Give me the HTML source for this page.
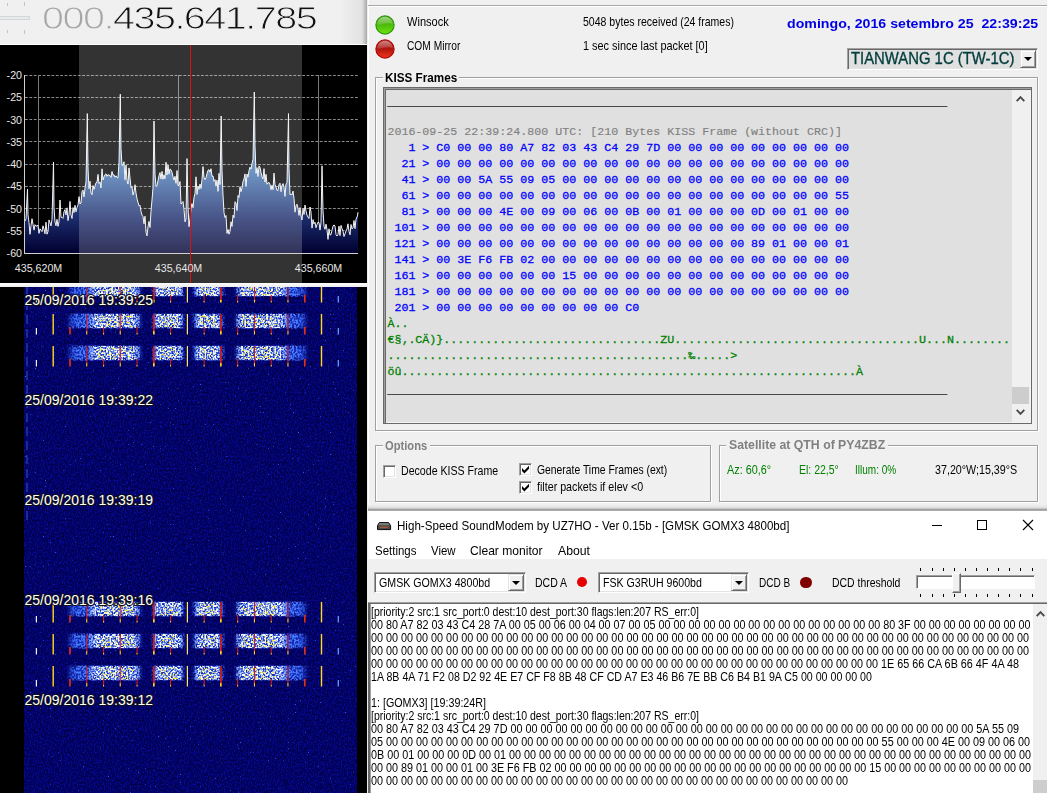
<!DOCTYPE html>
<html lang="pt"><head><meta charset="utf-8"><title>SDR + KISS + SoundModem</title>
<style>html,body{margin:0;padding:0}body{width:1047px;height:793px;overflow:hidden;position:relative;background:#f0f0f0;-webkit-font-smoothing:antialiased}
#left{position:absolute;left:0;top:0;width:367px;height:793px;background:#000;overflow:hidden}
#ltop{position:absolute;left:0;top:0;width:367px;height:44px;background:linear-gradient(90deg,#f0f0f0 0,#f0f0f0 340px,#e2e2e2 362px,#a8a8a8 367px);border-bottom:1px solid #fff}
#ltop .trk{position:absolute;left:0;top:16px;width:29px;height:2px;background:#e6eaea;border:1px solid #d4d8d8;border-left:0}
#ltop .tk{position:absolute;width:1px;height:3px;background:#c4c4c4}
#freq{position:absolute;left:42.2px;top:1px;font:30.5px/34px "Liberation Sans",sans-serif;color:#111;letter-spacing:-1.2px;-webkit-text-stroke:0.9px #f0f0f0;transform:scaleX(1.3);transform-origin:0 0;white-space:nowrap;font-weight:400}
#freq .g{color:#a6a6a6}
.spec{position:absolute;left:0;top:45px}
.spec .ax{font:10.67px "Liberation Sans",sans-serif;fill:#e8e8e8}
#split{position:absolute;left:0;top:283px;width:367px;height:4px;background:linear-gradient(#fff,#ececec)}
.wf{position:absolute;left:24px;top:287px}
.wf .ts{font:14px "Liberation Sans",sans-serif;fill:#fff;stroke:#101018;stroke-width:2.2px;paint-order:stroke;stroke-linejoin:round}

#rt{position:absolute;left:368px;top:0;width:679px;height:511px;background:#f0f0f0;overflow:hidden;box-shadow:inset 1px 0 0 #fff}
#rt .topline{position:absolute;left:0;top:5px;width:679px;height:1px;background:#a8a8a8;border-bottom:1px solid #fff}
.a{position:absolute;white-space:nowrap;display:block;transform-origin:0 50%}
.ms{font:12.4px "Liberation Sans",sans-serif;color:#000}
.grn{color:#008000}
.date{font:bold 13.3px "Liberation Sans",sans-serif;color:#0000e6}
.tw{font:16px "Liberation Sans",sans-serif;color:#003c3c;-webkit-text-stroke:0.35px #003c3c}
.gbl{font:bold 12px "Liberation Sans",sans-serif;color:#000}
.gbl.gr{color:#808080}
.sat{font:bold 12px "Liberation Sans",sans-serif;color:#808080}
.led{position:absolute;width:19px;height:19px;border-radius:50%;box-sizing:border-box}
.lg{background:radial-gradient(ellipse 70% 45% at 50% 22%,#a8e878 0,#6cc82c 55%,rgba(80,180,20,0) 100%),linear-gradient(#5abf1c,#52c00c 60%,#66dc10);border:1px solid #3f9c0c}
.lr{background:radial-gradient(ellipse 70% 45% at 50% 22%,#d87868 0,#b83020 55%,rgba(170,30,20,0) 100%),linear-gradient(#a81c14,#b41810 60%,#e02818);border:1px solid #98100c}
.combo{position:absolute;box-sizing:border-box;background:#f0f0f0;border:1px solid;border-color:#a0a0a0 #fff #fff #a0a0a0;box-shadow:inset 1px 1px 0 #696969,inset -1px -1px 0 #e3e3e3}
.cbtn{position:absolute;right:1px;top:1px;bottom:1px;width:16px;box-sizing:border-box;background:#f0f0f0;border:1px solid;border-color:#e3e3e3 #696969 #696969 #e3e3e3;box-shadow:inset 1px 1px 0 #fff,inset -1px -1px 0 #a0a0a0}
.cbtn i{position:absolute;left:3px;top:6px;border:4px solid transparent;border-top:4px solid #000;border-bottom:0;width:0;height:0}
.gb{position:absolute;box-sizing:border-box;border:1px solid #a0a0a0;box-shadow:inset 1px 1px 0 #fff,1px 1px 0 #fff}
.gl{position:absolute;background:#f0f0f0}
#kbox{position:absolute;left:15px;top:87px;width:649px;height:337px;box-sizing:border-box;border:1px solid #696969;box-shadow:inset 1px 1px 0 #a0a0a0,inset 2px 2px 0 #696969,inset -1px -1px 0 #f4f4f4;background:#e0e0e0;overflow:hidden}
#kin{position:absolute;left:3.4px;top:3.7px;width:640px}
.kr{font:11.667px/16px "Liberation Mono",monospace;white-space:pre;height:16px;color:#0000ff;font-weight:normal;-webkit-text-stroke:0.28px currentColor}
.kr.g{color:#808080;-webkit-text-stroke:0.15px currentColor}
.kr.u{color:#484848;font-weight:normal;position:relative;top:3.3px;-webkit-text-stroke:0.4px #484848}
.kr.v{color:#008000}
.ksb{position:absolute;left:628px;top:2px;width:17.5px;height:332px;background:#f0f0f0}
.ksb .ch{position:absolute;left:4px}
.kth{position:absolute;left:0;top:297px;width:17px;height:17px;background:#cdcdcd}
.cb{position:absolute;width:13px;height:13px;box-sizing:border-box;background:#fff;border:1px solid;border-color:#a0a0a0 #fff #fff #a0a0a0;box-shadow:inset 1px 1px 0 #696969,inset -1px -1px 0 #e3e3e3}
.cb svg{position:absolute;left:1px;top:1px}
.botsh{position:absolute;left:0;top:505px;width:679px;height:6px;background:linear-gradient(#f0f0f0,#dcdcdc 50%,#a0a0a0 75%,#8a8a8a 85%,#d8d8d8)}

#rb{position:absolute;left:368px;top:511px;width:679px;height:282px;background:#fff;overflow:hidden}
.seg{font:12.2px "Liberation Sans",sans-serif;color:#000}
#tb{position:absolute;left:0;top:48px;width:679px;height:43px;background:#f0f0f0}
.combo.w{background:#fff}
.dot{position:absolute;border-radius:50%}
.ticks i{position:absolute;width:1px;height:2.5px;background:#000}
.track{position:absolute;left:548.4px;top:63.6px;width:118.6px;height:14.6px;box-sizing:border-box;background:#fff;border:1px solid;border-color:#a0a0a0 #fff #fff #a0a0a0;box-shadow:inset 1px 1px 0 #696969}
.thumb{position:absolute;left:584px;top:62px;width:9px;height:19.6px;box-sizing:border-box;background:#f0f0f0;border:1px solid;border-color:#fff #696969 #696969 #fff;box-shadow:inset -1px -1px 0 #a0a0a0}
.sep{position:absolute;left:0;top:91px;width:679px;height:2px;background:#696969;border-top:1px solid #a0a0a0;box-sizing:border-box}
#mon{position:absolute;left:0;top:93px;width:665px;height:189px;background:#fff;border-left:2px solid #696969;box-sizing:border-box;box-shadow:inset 1px 0 0 #a0a0a0}
.msb{position:absolute;left:665px;top:93px;width:14px;height:189px;background:#f0f0f0}
.mth{position:absolute;left:0;top:175.5px;width:14px;height:20px;background:#cdcdcd}
</style></head>
<body>
<div id="left">
<div id="ltop"><div class="trk"></div><i class="tk" style="left:7px;top:3px"></i><i class="tk" style="left:24px;top:2px;height:4px"></i><i class="tk" style="left:7px;top:30px"></i><i class="tk" style="left:24px;top:30px;height:4px"></i>
<div id="freq"><span class="g">000.</span>435.641.785</div></div>
<svg class="spec" width="367" height="238" viewBox="0 0 367 238">
<defs><linearGradient id="sg" x1="0" y1="30" x2="0" y2="208" gradientUnits="userSpaceOnUse"><stop offset="0" stop-color="#7fb4ee"/><stop offset="0.55" stop-color="#4878b4"/><stop offset="0.8" stop-color="#1c2c6c"/><stop offset="1" stop-color="#000030"/></linearGradient></defs>
<rect width="367" height="238" fill="#000"/>
<line x1="25" x2="358" y1="30.5" y2="30.5" stroke="#8c8c8c" stroke-width="1" stroke-dasharray="2.8,1.6"/>
<line x1="25" x2="358" y1="52.5" y2="52.5" stroke="#8c8c8c" stroke-width="1" stroke-dasharray="2.8,1.6"/>
<line x1="25" x2="358" y1="74.5" y2="74.5" stroke="#8c8c8c" stroke-width="1" stroke-dasharray="2.8,1.6"/>
<line x1="25" x2="358" y1="96.5" y2="96.5" stroke="#8c8c8c" stroke-width="1" stroke-dasharray="2.8,1.6"/>
<line x1="25" x2="358" y1="119.5" y2="119.5" stroke="#8c8c8c" stroke-width="1" stroke-dasharray="2.8,1.6"/>
<line x1="25" x2="358" y1="141.5" y2="141.5" stroke="#8c8c8c" stroke-width="1" stroke-dasharray="2.8,1.6"/>
<line x1="25" x2="358" y1="163.5" y2="163.5" stroke="#8c8c8c" stroke-width="1" stroke-dasharray="2.8,1.6"/>
<line x1="25" x2="358" y1="185.5" y2="185.5" stroke="#8c8c8c" stroke-width="1" stroke-dasharray="2.8,1.6"/>
<line x1="38.5" x2="38.5" y1="30" y2="208" stroke="#7a7a7a" stroke-width="1"/>
<line x1="178.5" x2="178.5" y1="30" y2="208" stroke="#7a7a7a" stroke-width="1"/>
<line x1="318.5" x2="318.5" y1="30" y2="208" stroke="#7a7a7a" stroke-width="1"/>
<polygon points="25,208 25.0,176.2 26.0,173.9 27.5,144.0 28.0,169.9 29.0,177.6 30.0,189.3 31.0,180.7 32.0,173.7 33.0,179.3 34.0,185.1 35.0,179.7 36.0,181.1 37.0,180.9 38.0,180.2 39.0,188.4 40.0,183.8 41.0,185.2 42.0,186.7 43.0,180.8 44.0,184.1 45.0,188.8 46.0,177.2 47.0,189.2 48.0,186.5 49.0,174.9 50.0,177.7 51.0,180.9 52.0,174.3 53.5,117.0 54.0,162.6 55.0,177.0 56.0,180.8 57.0,174.3 58.0,181.4 59.0,176.7 60.0,155.0 61.0,172.3 62.0,172.4 63.0,173.4 64.0,166.6 65.0,164.6 66.0,169.9 67.0,162.8 68.0,175.6 69.0,169.5 70.0,156.4 71.0,169.9 72.0,173.5 73.0,162.6 74.0,167.6 75.0,160.3 76.0,166.8 77.0,162.6 78.0,159.9 79.0,151.6 80.0,159.0 81.0,158.0 82.0,146.7 83.0,145.1 84.0,151.9 85.0,143.3 86.0,137.0 87.3,68.6 88.0,123.0 89.0,143.7 90.0,136.2 91.0,148.0 92.0,149.7 93.0,140.5 94.0,144.4 95.0,141.1 96.0,137.7 97.0,137.3 98.0,129.4 99.0,138.5 100.0,137.1 101.0,142.9 102.0,123.8 103.0,135.0 104.0,131.8 105.0,129.7 106.0,128.8 107.0,131.3 108.0,129.6 109.0,130.3 110.0,130.4 111.0,132.4 112.0,126.5 113.0,130.1 114.0,129.8 115.0,132.2 116.0,130.8 117.0,132.5 118.0,132.9 119.0,117.7 120.3,49.2 121.0,103.7 122.0,120.3 123.0,120.2 124.0,116.8 125.0,134.7 126.0,120.0 127.0,135.4 128.0,139.1 129.0,122.9 130.0,132.9 131.0,142.7 132.0,141.9 133.0,150.0 134.0,146.8 135.0,139.7 136.0,148.0 137.0,153.7 138.0,157.3 139.0,160.8 140.0,160.2 141.0,166.4 142.0,170.1 143.0,171.5 144.0,178.8 145.0,171.2 146.0,187.3 147.0,190.9 148.0,181.9 149.0,176.4 150.0,182.5 151.0,166.2 152.0,155.0 153.0,142.9 154.0,76.0 155.0,129.2 156.0,141.6 157.0,140.8 158.0,135.6 159.0,130.7 160.0,127.6 161.0,134.0 162.0,126.4 163.0,134.3 164.0,129.8 165.0,133.7 166.0,117.2 167.0,130.0 168.0,120.0 169.0,129.1 170.0,123.9 171.0,124.8 172.0,127.3 173.0,131.8 174.0,135.1 175.0,131.3 176.0,138.3 177.0,125.5 178.0,140.8 179.0,140.1 180.0,136.5 181.0,159.0 182.0,157.7 183.0,156.5 184.0,164.2 185.0,176.8 186.0,173.9 187.0,113.6 188.0,161.6 189.0,181.7 190.0,173.9 191.0,163.0 192.0,158.6 193.0,162.7 194.0,152.4 195.0,148.4 196.0,131.8 197.0,149.5 198.0,141.3 199.0,144.4 200.0,139.0 201.0,143.5 202.0,134.4 203.0,121.6 204.0,132.3 205.0,134.6 206.0,132.7 207.0,128.5 208.0,125.3 209.0,124.7 210.0,127.2 211.0,123.7 212.0,131.4 213.0,130.9 214.0,136.3 215.0,134.6 216.0,141.2 217.0,135.2 218.0,146.4 219.0,128.3 220.0,139.6 221.2,71.0 222.0,125.6 223.0,150.0 224.0,167.6 225.0,172.6 226.0,170.5 227.0,188.4 228.0,184.5 229.0,189.2 230.0,186.4 231.0,176.7 232.0,181.5 233.0,170.2 234.0,172.7 235.0,156.7 236.0,158.1 237.0,165.5 238.0,150.5 239.0,152.4 240.0,141.7 241.0,146.7 242.0,142.9 243.0,136.4 244.0,133.9 245.0,128.9 246.0,141.5 247.0,129.1 248.0,132.2 249.0,125.6 250.0,122.1 251.0,124.1 252.0,118.4 253.0,114.4 254.3,47.0 255.0,100.6 256.0,128.4 257.0,122.6 258.0,131.5 259.0,120.9 260.0,122.4 261.0,127.4 262.0,131.6 263.0,133.9 264.0,123.6 265.0,137.1 266.0,129.3 267.0,139.2 268.0,137.9 269.0,137.4 270.0,139.4 271.0,144.8 272.0,140.2 273.0,144.7 274.0,128.1 275.0,139.6 276.0,142.1 277.0,145.3 278.0,145.4 279.0,139.6 280.0,138.2 281.0,146.7 282.0,140.5 283.0,138.6 284.0,142.4 285.0,151.4 286.0,138.7 287.0,137.8 288.5,68.6 289.0,123.6 290.0,149.7 291.0,149.0 292.0,149.8 293.0,146.1 294.0,153.4 295.0,167.2 296.0,160.8 297.0,159.2 298.0,163.3 299.0,170.4 300.0,162.6 301.0,171.0 302.0,175.0 303.0,163.5 304.0,169.5 305.0,160.0 306.0,166.1 307.0,170.1 308.0,172.1 309.0,173.5 310.0,162.0 311.0,167.0 312.0,183.1 313.0,174.6 314.0,178.9 315.0,177.2 316.0,182.7 317.0,179.5 318.0,177.2 319.0,177.5 320.0,185.1 321.0,177.3 322.0,120.8 323.0,165.7 324.0,181.3 325.0,184.3 326.0,179.1 327.0,184.5 328.0,194.4 329.0,183.8 330.0,190.1 331.0,189.6 332.0,185.4 333.0,181.1 334.0,179.9 335.0,181.1 336.0,189.6 337.0,191.0 338.0,189.5 339.0,181.1 340.0,190.6 341.0,180.4 342.0,183.5 343.0,186.2 344.0,191.5 345.0,188.9 346.0,185.9 347.0,184.0 348.0,178.8 349.0,186.4 350.0,189.8 351.0,179.5 352.0,183.9 353.0,182.8 354.0,175.5 355.0,183.6 356.0,174.2 357.5,171.0 358.0,167.2 358,208" fill="url(#sg)"/>
<polyline points="25.0,176.2 26.0,173.9 27.5,144.0 28.0,169.9 29.0,177.6 30.0,189.3 31.0,180.7 32.0,173.7 33.0,179.3 34.0,185.1 35.0,179.7 36.0,181.1 37.0,180.9 38.0,180.2 39.0,188.4 40.0,183.8 41.0,185.2 42.0,186.7 43.0,180.8 44.0,184.1 45.0,188.8 46.0,177.2 47.0,189.2 48.0,186.5 49.0,174.9 50.0,177.7 51.0,180.9 52.0,174.3 53.5,117.0 54.0,162.6 55.0,177.0 56.0,180.8 57.0,174.3 58.0,181.4 59.0,176.7 60.0,155.0 61.0,172.3 62.0,172.4 63.0,173.4 64.0,166.6 65.0,164.6 66.0,169.9 67.0,162.8 68.0,175.6 69.0,169.5 70.0,156.4 71.0,169.9 72.0,173.5 73.0,162.6 74.0,167.6 75.0,160.3 76.0,166.8 77.0,162.6 78.0,159.9 79.0,151.6 80.0,159.0 81.0,158.0 82.0,146.7 83.0,145.1 84.0,151.9 85.0,143.3 86.0,137.0 87.3,68.6 88.0,123.0 89.0,143.7 90.0,136.2 91.0,148.0 92.0,149.7 93.0,140.5 94.0,144.4 95.0,141.1 96.0,137.7 97.0,137.3 98.0,129.4 99.0,138.5 100.0,137.1 101.0,142.9 102.0,123.8 103.0,135.0 104.0,131.8 105.0,129.7 106.0,128.8 107.0,131.3 108.0,129.6 109.0,130.3 110.0,130.4 111.0,132.4 112.0,126.5 113.0,130.1 114.0,129.8 115.0,132.2 116.0,130.8 117.0,132.5 118.0,132.9 119.0,117.7 120.3,49.2 121.0,103.7 122.0,120.3 123.0,120.2 124.0,116.8 125.0,134.7 126.0,120.0 127.0,135.4 128.0,139.1 129.0,122.9 130.0,132.9 131.0,142.7 132.0,141.9 133.0,150.0 134.0,146.8 135.0,139.7 136.0,148.0 137.0,153.7 138.0,157.3 139.0,160.8 140.0,160.2 141.0,166.4 142.0,170.1 143.0,171.5 144.0,178.8 145.0,171.2 146.0,187.3 147.0,190.9 148.0,181.9 149.0,176.4 150.0,182.5 151.0,166.2 152.0,155.0 153.0,142.9 154.0,76.0 155.0,129.2 156.0,141.6 157.0,140.8 158.0,135.6 159.0,130.7 160.0,127.6 161.0,134.0 162.0,126.4 163.0,134.3 164.0,129.8 165.0,133.7 166.0,117.2 167.0,130.0 168.0,120.0 169.0,129.1 170.0,123.9 171.0,124.8 172.0,127.3 173.0,131.8 174.0,135.1 175.0,131.3 176.0,138.3 177.0,125.5 178.0,140.8 179.0,140.1 180.0,136.5 181.0,159.0 182.0,157.7 183.0,156.5 184.0,164.2 185.0,176.8 186.0,173.9 187.0,113.6 188.0,161.6 189.0,181.7 190.0,173.9 191.0,163.0 192.0,158.6 193.0,162.7 194.0,152.4 195.0,148.4 196.0,131.8 197.0,149.5 198.0,141.3 199.0,144.4 200.0,139.0 201.0,143.5 202.0,134.4 203.0,121.6 204.0,132.3 205.0,134.6 206.0,132.7 207.0,128.5 208.0,125.3 209.0,124.7 210.0,127.2 211.0,123.7 212.0,131.4 213.0,130.9 214.0,136.3 215.0,134.6 216.0,141.2 217.0,135.2 218.0,146.4 219.0,128.3 220.0,139.6 221.2,71.0 222.0,125.6 223.0,150.0 224.0,167.6 225.0,172.6 226.0,170.5 227.0,188.4 228.0,184.5 229.0,189.2 230.0,186.4 231.0,176.7 232.0,181.5 233.0,170.2 234.0,172.7 235.0,156.7 236.0,158.1 237.0,165.5 238.0,150.5 239.0,152.4 240.0,141.7 241.0,146.7 242.0,142.9 243.0,136.4 244.0,133.9 245.0,128.9 246.0,141.5 247.0,129.1 248.0,132.2 249.0,125.6 250.0,122.1 251.0,124.1 252.0,118.4 253.0,114.4 254.3,47.0 255.0,100.6 256.0,128.4 257.0,122.6 258.0,131.5 259.0,120.9 260.0,122.4 261.0,127.4 262.0,131.6 263.0,133.9 264.0,123.6 265.0,137.1 266.0,129.3 267.0,139.2 268.0,137.9 269.0,137.4 270.0,139.4 271.0,144.8 272.0,140.2 273.0,144.7 274.0,128.1 275.0,139.6 276.0,142.1 277.0,145.3 278.0,145.4 279.0,139.6 280.0,138.2 281.0,146.7 282.0,140.5 283.0,138.6 284.0,142.4 285.0,151.4 286.0,138.7 287.0,137.8 288.5,68.6 289.0,123.6 290.0,149.7 291.0,149.0 292.0,149.8 293.0,146.1 294.0,153.4 295.0,167.2 296.0,160.8 297.0,159.2 298.0,163.3 299.0,170.4 300.0,162.6 301.0,171.0 302.0,175.0 303.0,163.5 304.0,169.5 305.0,160.0 306.0,166.1 307.0,170.1 308.0,172.1 309.0,173.5 310.0,162.0 311.0,167.0 312.0,183.1 313.0,174.6 314.0,178.9 315.0,177.2 316.0,182.7 317.0,179.5 318.0,177.2 319.0,177.5 320.0,185.1 321.0,177.3 322.0,120.8 323.0,165.7 324.0,181.3 325.0,184.3 326.0,179.1 327.0,184.5 328.0,194.4 329.0,183.8 330.0,190.1 331.0,189.6 332.0,185.4 333.0,181.1 334.0,179.9 335.0,181.1 336.0,189.6 337.0,191.0 338.0,189.5 339.0,181.1 340.0,190.6 341.0,180.4 342.0,183.5 343.0,186.2 344.0,191.5 345.0,188.9 346.0,185.9 347.0,184.0 348.0,178.8 349.0,186.4 350.0,189.8 351.0,179.5 352.0,183.9 353.0,182.8 354.0,175.5 355.0,183.6 356.0,174.2 357.5,171.0 358.0,167.2" fill="none" stroke="#f4f4f4" stroke-width="1" stroke-linejoin="miter"/>
<rect x="79" y="0" width="223" height="238" fill="#fff" fill-opacity="0.2"/>
<line x1="24.5" x2="24.5" y1="30" y2="208.5" stroke="#d0d0d0" stroke-width="1"/>
<line x1="24" x2="358" y1="208.5" y2="208.5" stroke="#d0d0d0" stroke-width="1"/>
<line x1="190.5" x2="190.5" y1="0" y2="238" stroke="#e01010" stroke-width="1"/>
<text x="22" y="34.0" text-anchor="end" class="ax">-20</text>
<text x="22" y="56.2" text-anchor="end" class="ax">-25</text>
<text x="22" y="78.5" text-anchor="end" class="ax">-30</text>
<text x="22" y="100.8" text-anchor="end" class="ax">-35</text>
<text x="22" y="123.0" text-anchor="end" class="ax">-40</text>
<text x="22" y="145.2" text-anchor="end" class="ax">-45</text>
<text x="22" y="167.5" text-anchor="end" class="ax">-50</text>
<text x="22" y="189.8" text-anchor="end" class="ax">-55</text>
<text x="22" y="212.0" text-anchor="end" class="ax">-60</text>
<text x="38.5" y="227" text-anchor="middle" class="ax">435,620M</text>
<text x="178.5" y="227" text-anchor="middle" class="ax">435,640M</text>
<text x="318.5" y="227" text-anchor="middle" class="ax">435,660M</text>
</svg>
<div id="split"></div>
<svg class="wf" width="333" height="506" viewBox="24 287 333 506">
<defs>
<filter id="nz" x="0" y="0" width="100%" height="100%" color-interpolation-filters="sRGB"><feTurbulence type="fractalNoise" baseFrequency="0.7 0.5" numOctaves="2" seed="3" result="t"/><feColorMatrix in="t" type="matrix" values="0.1 0 0 0 -0.04  0.1 0 0 0 -0.04  0.75 0 0 0 0.035  0 0 0 0 1"/></filter>
<filter id="nb" x="0" y="0" width="100%" height="100%" color-interpolation-filters="sRGB"><feTurbulence type="fractalNoise" baseFrequency="0.6 0.5" numOctaves="1" seed="41" result="t"/><feColorMatrix in="t" type="matrix" values="0 0 0 0 1  0 0 0 0 1  0 0 0 0 1  0 8 0 0 -5.9" result="m"/><feComposite in="SourceGraphic" in2="m" operator="in"/></filter>
<filter id="so" x="0" y="0" width="100%" height="100%" color-interpolation-filters="sRGB"><feTurbulence type="fractalNoise" baseFrequency="0.55 0.5" numOctaves="1" seed="5" result="t"/><feColorMatrix in="t" type="matrix" values="0 0 0 0 1  0 0 0 0 1  0 0 0 0 1  0 0 6 0 -2.55" result="m"/><feComposite in="SourceGraphic" in2="m" operator="in"/><feGaussianBlur stdDeviation="0.4"/></filter>
<filter id="sp" x="0" y="0" width="100%" height="100%" color-interpolation-filters="sRGB"><feTurbulence type="fractalNoise" baseFrequency="0.6 0.55" numOctaves="1" seed="11" result="t"/><feColorMatrix in="t" type="matrix" values="0 0 0 0 1  0 0 0 0 1  0 0 0 0 1  6 0 0 0 -2.55" result="m"/><feComposite in="SourceGraphic" in2="m" operator="in"/><feGaussianBlur stdDeviation="0.4"/></filter>
<filter id="sy" x="0" y="0" width="100%" height="100%" color-interpolation-filters="sRGB"><feTurbulence type="fractalNoise" baseFrequency="0.55 0.5" numOctaves="1" seed="23" result="t"/><feColorMatrix in="t" type="matrix" values="0 0 0 0 1  0 0 0 0 1  0 0 0 0 1  0 7 0 0 -4.0" result="m"/><feComposite in="SourceGraphic" in2="m" operator="in"/><feGaussianBlur stdDeviation="0.4"/></filter>
<filter id="gl" x="-10%" y="-50%" width="120%" height="200%"><feGaussianBlur stdDeviation="2.2 1.6"/></filter>
<linearGradient id="fo" x1="0" x2="1"><stop offset="0" stop-color="#4a7cff" stop-opacity="0"/><stop offset="0.15" stop-color="#4a7cff" stop-opacity="1"/><stop offset="0.85" stop-color="#4a7cff" stop-opacity="1"/><stop offset="1" stop-color="#4a7cff" stop-opacity="0"/></linearGradient>
<linearGradient id="fc" x1="0" x2="1"><stop offset="0" stop-color="#a8c8ff" stop-opacity="0.5"/><stop offset="0.12" stop-color="#f4f8ff"/><stop offset="0.88" stop-color="#f4f8ff"/><stop offset="1" stop-color="#a8c8ff" stop-opacity="0.5"/></linearGradient>
<linearGradient id="ln" x1="0" x2="0" y1="0" y2="1"><stop offset="0" stop-color="#c81414"/><stop offset="0.8" stop-color="#d82010"/><stop offset="0.86" stop-color="#ffd020"/><stop offset="1" stop-color="#ffd020"/></linearGradient>
</defs>
<rect x="24" y="287" width="333" height="506" fill="#0a0a88"/>
<rect x="24" y="287" width="333" height="506" filter="url(#nz)"/>
<rect x="24" y="287" width="333" height="506" fill="#3a78ff" filter="url(#nb)"/>
<line x1="27" x2="27" y1="287" y2="520" stroke="#3a7af0" stroke-width="1" stroke-dasharray="9,5" opacity="0.7"/>
<g filter="url(#gl)" opacity="0.6">
<rect x="70" y="288" width="70" height="7" fill="#2448e8"/>
<rect x="154" y="288" width="28" height="7" fill="#2448e8"/>
<rect x="195" y="288" width="27" height="7" fill="#2448e8"/>
<rect x="237" y="288" width="68" height="7" fill="#2448e8"/>
</g>
<g filter="url(#so)">
<rect x="66" y="286.5" width="78" height="10" fill="url(#fo)"/>
<rect x="150" y="286.5" width="36" height="10" fill="url(#fo)"/>
<rect x="191" y="286.5" width="35" height="10" fill="url(#fo)"/>
<rect x="233" y="286.5" width="76" height="10" fill="url(#fo)"/>
</g>
<g filter="url(#sp)">
<rect x="89" y="287" width="51" height="9" fill="url(#fc)"/>
<rect x="154" y="287" width="29" height="9" fill="url(#fc)"/>
<rect x="195" y="287" width="26" height="9" fill="url(#fc)"/>
<rect x="236" y="287" width="51" height="9" fill="url(#fc)"/>
</g>
<g filter="url(#sy)">
<rect x="97" y="288" width="37" height="7" fill="#ffec20"/>
<rect x="160" y="288" width="18" height="7" fill="#ffec20"/>
<rect x="199" y="288" width="17" height="7" fill="#ffec20"/>
<rect x="242" y="288" width="36" height="7" fill="#ffec20"/>
</g>
<line x1="36.4" x2="36.4" y1="296" y2="302.5" stroke="#f0f0ff" stroke-width="1.2"/>
<line x1="53.2" x2="53.2" y1="287" y2="302.5" stroke="#ffd820" stroke-width="1.4"/>
<line x1="70.0" x2="70.0" y1="295" y2="302.5" stroke="#e83010" stroke-width="1.6"/>
<rect x="86.2" y="287" width="1.1" height="15.5" fill="url(#ln)"/>
<rect x="103.0" y="295" width="1.1" height="7.5" fill="url(#ln)"/>
<rect x="119.7" y="287" width="1.1" height="15.5" fill="url(#ln)"/>
<rect x="136.5" y="295" width="1.1" height="7.5" fill="url(#ln)"/>
<rect x="153.0" y="287" width="1.7" height="15.5" fill="url(#ln)"/>
<rect x="170.0" y="295" width="1.1" height="7.5" fill="url(#ln)"/>
<line x1="187.4" x2="187.4" y1="287" y2="302.5" stroke="#ffe860" stroke-width="1.2"/>
<rect x="203.6" y="295" width="1.1" height="7.5" fill="url(#ln)"/>
<rect x="220.0" y="287" width="1.7" height="15.5" fill="url(#ln)"/>
<rect x="237.1" y="295" width="1.1" height="7.5" fill="url(#ln)"/>
<rect x="253.9" y="287" width="1.1" height="15.5" fill="url(#ln)"/>
<rect x="270.7" y="295" width="1.1" height="7.5" fill="url(#ln)"/>
<rect x="287.4" y="287" width="1.1" height="15.5" fill="url(#ln)"/>
<line x1="304.8" x2="304.8" y1="295" y2="302.5" stroke="#e83010" stroke-width="1.6"/>
<line x1="321.5" x2="321.5" y1="287" y2="302.5" stroke="#ffd820" stroke-width="1.4"/>
<line x1="338.3" x2="338.3" y1="296" y2="302.5" stroke="#6aa8ff" stroke-width="1.2"/>
<g filter="url(#gl)" opacity="0.6">
<rect x="70" y="315" width="70" height="12" fill="#2448e8"/>
<rect x="154" y="315" width="28" height="12" fill="#2448e8"/>
<rect x="195" y="315" width="27" height="12" fill="#2448e8"/>
<rect x="237" y="315" width="68" height="12" fill="#2448e8"/>
</g>
<g filter="url(#so)">
<rect x="66" y="313.5" width="78" height="15" fill="url(#fo)"/>
<rect x="150" y="313.5" width="36" height="15" fill="url(#fo)"/>
<rect x="191" y="313.5" width="35" height="15" fill="url(#fo)"/>
<rect x="233" y="313.5" width="76" height="15" fill="url(#fo)"/>
</g>
<g filter="url(#sp)">
<rect x="89" y="314" width="51" height="14" fill="url(#fc)"/>
<rect x="154" y="314" width="29" height="14" fill="url(#fc)"/>
<rect x="195" y="314" width="26" height="14" fill="url(#fc)"/>
<rect x="236" y="314" width="51" height="14" fill="url(#fc)"/>
</g>
<g filter="url(#sy)">
<rect x="97" y="315" width="37" height="12" fill="#ffec20"/>
<rect x="160" y="315" width="18" height="12" fill="#ffec20"/>
<rect x="199" y="315" width="17" height="12" fill="#ffec20"/>
<rect x="242" y="315" width="36" height="12" fill="#ffec20"/>
</g>
<line x1="36.4" x2="36.4" y1="328" y2="334.5" stroke="#f0f0ff" stroke-width="1.2"/>
<line x1="53.2" x2="53.2" y1="314" y2="334.5" stroke="#ffd820" stroke-width="1.4"/>
<line x1="70.0" x2="70.0" y1="327" y2="334.5" stroke="#e83010" stroke-width="1.6"/>
<rect x="86.2" y="314" width="1.1" height="20.5" fill="url(#ln)"/>
<rect x="103.0" y="327" width="1.1" height="7.5" fill="url(#ln)"/>
<rect x="119.7" y="314" width="1.1" height="20.5" fill="url(#ln)"/>
<rect x="136.5" y="327" width="1.1" height="7.5" fill="url(#ln)"/>
<rect x="153.0" y="314" width="1.7" height="20.5" fill="url(#ln)"/>
<rect x="170.0" y="327" width="1.1" height="7.5" fill="url(#ln)"/>
<line x1="187.4" x2="187.4" y1="314" y2="334.5" stroke="#ffe860" stroke-width="1.2"/>
<rect x="203.6" y="327" width="1.1" height="7.5" fill="url(#ln)"/>
<rect x="220.0" y="314" width="1.7" height="20.5" fill="url(#ln)"/>
<rect x="237.1" y="327" width="1.1" height="7.5" fill="url(#ln)"/>
<rect x="253.9" y="314" width="1.1" height="20.5" fill="url(#ln)"/>
<rect x="270.7" y="327" width="1.1" height="7.5" fill="url(#ln)"/>
<rect x="287.4" y="314" width="1.1" height="20.5" fill="url(#ln)"/>
<line x1="304.8" x2="304.8" y1="327" y2="334.5" stroke="#e83010" stroke-width="1.6"/>
<line x1="321.5" x2="321.5" y1="314" y2="334.5" stroke="#ffd820" stroke-width="1.4"/>
<line x1="338.3" x2="338.3" y1="328" y2="334.5" stroke="#6aa8ff" stroke-width="1.2"/>
<g filter="url(#gl)" opacity="0.6">
<rect x="70" y="347" width="70" height="12" fill="#2448e8"/>
<rect x="154" y="347" width="28" height="12" fill="#2448e8"/>
<rect x="195" y="347" width="27" height="12" fill="#2448e8"/>
<rect x="237" y="347" width="68" height="12" fill="#2448e8"/>
</g>
<g filter="url(#so)">
<rect x="66" y="345.5" width="78" height="15" fill="url(#fo)"/>
<rect x="150" y="345.5" width="36" height="15" fill="url(#fo)"/>
<rect x="191" y="345.5" width="35" height="15" fill="url(#fo)"/>
<rect x="233" y="345.5" width="76" height="15" fill="url(#fo)"/>
</g>
<g filter="url(#sp)">
<rect x="89" y="346" width="51" height="14" fill="url(#fc)"/>
<rect x="154" y="346" width="29" height="14" fill="url(#fc)"/>
<rect x="195" y="346" width="26" height="14" fill="url(#fc)"/>
<rect x="236" y="346" width="51" height="14" fill="url(#fc)"/>
</g>
<g filter="url(#sy)">
<rect x="97" y="347" width="37" height="12" fill="#ffec20"/>
<rect x="160" y="347" width="18" height="12" fill="#ffec20"/>
<rect x="199" y="347" width="17" height="12" fill="#ffec20"/>
<rect x="242" y="347" width="36" height="12" fill="#ffec20"/>
</g>
<line x1="36.4" x2="36.4" y1="360" y2="366.5" stroke="#f0f0ff" stroke-width="1.2"/>
<line x1="53.2" x2="53.2" y1="346" y2="366.5" stroke="#ffd820" stroke-width="1.4"/>
<line x1="70.0" x2="70.0" y1="359" y2="366.5" stroke="#e83010" stroke-width="1.6"/>
<rect x="86.2" y="346" width="1.1" height="20.5" fill="url(#ln)"/>
<rect x="103.0" y="359" width="1.1" height="7.5" fill="url(#ln)"/>
<rect x="119.7" y="346" width="1.1" height="20.5" fill="url(#ln)"/>
<rect x="136.5" y="359" width="1.1" height="7.5" fill="url(#ln)"/>
<rect x="153.0" y="346" width="1.7" height="20.5" fill="url(#ln)"/>
<rect x="170.0" y="359" width="1.1" height="7.5" fill="url(#ln)"/>
<line x1="187.4" x2="187.4" y1="346" y2="366.5" stroke="#ffe860" stroke-width="1.2"/>
<rect x="203.6" y="359" width="1.1" height="7.5" fill="url(#ln)"/>
<rect x="220.0" y="346" width="1.7" height="20.5" fill="url(#ln)"/>
<rect x="237.1" y="359" width="1.1" height="7.5" fill="url(#ln)"/>
<rect x="253.9" y="346" width="1.1" height="20.5" fill="url(#ln)"/>
<rect x="270.7" y="359" width="1.1" height="7.5" fill="url(#ln)"/>
<rect x="287.4" y="346" width="1.1" height="20.5" fill="url(#ln)"/>
<line x1="304.8" x2="304.8" y1="359" y2="366.5" stroke="#e83010" stroke-width="1.6"/>
<line x1="321.5" x2="321.5" y1="346" y2="366.5" stroke="#ffd820" stroke-width="1.4"/>
<line x1="338.3" x2="338.3" y1="360" y2="366.5" stroke="#6aa8ff" stroke-width="1.2"/>
<g filter="url(#gl)" opacity="0.6">
<rect x="70" y="603" width="70" height="12" fill="#2448e8"/>
<rect x="154" y="603" width="28" height="12" fill="#2448e8"/>
<rect x="195" y="603" width="27" height="12" fill="#2448e8"/>
<rect x="237" y="603" width="68" height="12" fill="#2448e8"/>
</g>
<g filter="url(#so)">
<rect x="66" y="601.5" width="78" height="15" fill="url(#fo)"/>
<rect x="150" y="601.5" width="36" height="15" fill="url(#fo)"/>
<rect x="191" y="601.5" width="35" height="15" fill="url(#fo)"/>
<rect x="233" y="601.5" width="76" height="15" fill="url(#fo)"/>
</g>
<g filter="url(#sp)">
<rect x="89" y="602" width="51" height="14" fill="url(#fc)"/>
<rect x="154" y="602" width="29" height="14" fill="url(#fc)"/>
<rect x="195" y="602" width="26" height="14" fill="url(#fc)"/>
<rect x="236" y="602" width="51" height="14" fill="url(#fc)"/>
</g>
<g filter="url(#sy)">
<rect x="97" y="603" width="37" height="12" fill="#ffec20"/>
<rect x="160" y="603" width="18" height="12" fill="#ffec20"/>
<rect x="199" y="603" width="17" height="12" fill="#ffec20"/>
<rect x="242" y="603" width="36" height="12" fill="#ffec20"/>
</g>
<line x1="36.4" x2="36.4" y1="616" y2="622.5" stroke="#f0f0ff" stroke-width="1.2"/>
<line x1="53.2" x2="53.2" y1="602" y2="622.5" stroke="#ffd820" stroke-width="1.4"/>
<line x1="70.0" x2="70.0" y1="615" y2="622.5" stroke="#e83010" stroke-width="1.6"/>
<rect x="86.2" y="602" width="1.1" height="20.5" fill="url(#ln)"/>
<rect x="103.0" y="615" width="1.1" height="7.5" fill="url(#ln)"/>
<rect x="119.7" y="602" width="1.1" height="20.5" fill="url(#ln)"/>
<rect x="136.5" y="615" width="1.1" height="7.5" fill="url(#ln)"/>
<rect x="153.0" y="602" width="1.7" height="20.5" fill="url(#ln)"/>
<rect x="170.0" y="615" width="1.1" height="7.5" fill="url(#ln)"/>
<line x1="187.4" x2="187.4" y1="602" y2="622.5" stroke="#ffe860" stroke-width="1.2"/>
<rect x="203.6" y="615" width="1.1" height="7.5" fill="url(#ln)"/>
<rect x="220.0" y="602" width="1.7" height="20.5" fill="url(#ln)"/>
<rect x="237.1" y="615" width="1.1" height="7.5" fill="url(#ln)"/>
<rect x="253.9" y="602" width="1.1" height="20.5" fill="url(#ln)"/>
<rect x="270.7" y="615" width="1.1" height="7.5" fill="url(#ln)"/>
<rect x="287.4" y="602" width="1.1" height="20.5" fill="url(#ln)"/>
<line x1="304.8" x2="304.8" y1="615" y2="622.5" stroke="#e83010" stroke-width="1.6"/>
<line x1="321.5" x2="321.5" y1="602" y2="622.5" stroke="#ffd820" stroke-width="1.4"/>
<line x1="338.3" x2="338.3" y1="616" y2="622.5" stroke="#6aa8ff" stroke-width="1.2"/>
<g filter="url(#gl)" opacity="0.6">
<rect x="70" y="635" width="70" height="12" fill="#2448e8"/>
<rect x="154" y="635" width="28" height="12" fill="#2448e8"/>
<rect x="195" y="635" width="27" height="12" fill="#2448e8"/>
<rect x="237" y="635" width="68" height="12" fill="#2448e8"/>
</g>
<g filter="url(#so)">
<rect x="66" y="633.5" width="78" height="15" fill="url(#fo)"/>
<rect x="150" y="633.5" width="36" height="15" fill="url(#fo)"/>
<rect x="191" y="633.5" width="35" height="15" fill="url(#fo)"/>
<rect x="233" y="633.5" width="76" height="15" fill="url(#fo)"/>
</g>
<g filter="url(#sp)">
<rect x="89" y="634" width="51" height="14" fill="url(#fc)"/>
<rect x="154" y="634" width="29" height="14" fill="url(#fc)"/>
<rect x="195" y="634" width="26" height="14" fill="url(#fc)"/>
<rect x="236" y="634" width="51" height="14" fill="url(#fc)"/>
</g>
<g filter="url(#sy)">
<rect x="97" y="635" width="37" height="12" fill="#ffec20"/>
<rect x="160" y="635" width="18" height="12" fill="#ffec20"/>
<rect x="199" y="635" width="17" height="12" fill="#ffec20"/>
<rect x="242" y="635" width="36" height="12" fill="#ffec20"/>
</g>
<line x1="36.4" x2="36.4" y1="648" y2="654.5" stroke="#f0f0ff" stroke-width="1.2"/>
<line x1="53.2" x2="53.2" y1="634" y2="654.5" stroke="#ffd820" stroke-width="1.4"/>
<line x1="70.0" x2="70.0" y1="647" y2="654.5" stroke="#e83010" stroke-width="1.6"/>
<rect x="86.2" y="634" width="1.1" height="20.5" fill="url(#ln)"/>
<rect x="103.0" y="647" width="1.1" height="7.5" fill="url(#ln)"/>
<rect x="119.7" y="634" width="1.1" height="20.5" fill="url(#ln)"/>
<rect x="136.5" y="647" width="1.1" height="7.5" fill="url(#ln)"/>
<rect x="153.0" y="634" width="1.7" height="20.5" fill="url(#ln)"/>
<rect x="170.0" y="647" width="1.1" height="7.5" fill="url(#ln)"/>
<line x1="187.4" x2="187.4" y1="634" y2="654.5" stroke="#ffe860" stroke-width="1.2"/>
<rect x="203.6" y="647" width="1.1" height="7.5" fill="url(#ln)"/>
<rect x="220.0" y="634" width="1.7" height="20.5" fill="url(#ln)"/>
<rect x="237.1" y="647" width="1.1" height="7.5" fill="url(#ln)"/>
<rect x="253.9" y="634" width="1.1" height="20.5" fill="url(#ln)"/>
<rect x="270.7" y="647" width="1.1" height="7.5" fill="url(#ln)"/>
<rect x="287.4" y="634" width="1.1" height="20.5" fill="url(#ln)"/>
<line x1="304.8" x2="304.8" y1="647" y2="654.5" stroke="#e83010" stroke-width="1.6"/>
<line x1="321.5" x2="321.5" y1="634" y2="654.5" stroke="#ffd820" stroke-width="1.4"/>
<line x1="338.3" x2="338.3" y1="648" y2="654.5" stroke="#6aa8ff" stroke-width="1.2"/>
<g filter="url(#gl)" opacity="0.6">
<rect x="70" y="667" width="70" height="12" fill="#2448e8"/>
<rect x="154" y="667" width="28" height="12" fill="#2448e8"/>
<rect x="195" y="667" width="27" height="12" fill="#2448e8"/>
<rect x="237" y="667" width="68" height="12" fill="#2448e8"/>
</g>
<g filter="url(#so)">
<rect x="66" y="665.5" width="78" height="15" fill="url(#fo)"/>
<rect x="150" y="665.5" width="36" height="15" fill="url(#fo)"/>
<rect x="191" y="665.5" width="35" height="15" fill="url(#fo)"/>
<rect x="233" y="665.5" width="76" height="15" fill="url(#fo)"/>
</g>
<g filter="url(#sp)">
<rect x="89" y="666" width="51" height="14" fill="url(#fc)"/>
<rect x="154" y="666" width="29" height="14" fill="url(#fc)"/>
<rect x="195" y="666" width="26" height="14" fill="url(#fc)"/>
<rect x="236" y="666" width="51" height="14" fill="url(#fc)"/>
</g>
<g filter="url(#sy)">
<rect x="97" y="667" width="37" height="12" fill="#ffec20"/>
<rect x="160" y="667" width="18" height="12" fill="#ffec20"/>
<rect x="199" y="667" width="17" height="12" fill="#ffec20"/>
<rect x="242" y="667" width="36" height="12" fill="#ffec20"/>
</g>
<line x1="36.4" x2="36.4" y1="680" y2="686.5" stroke="#f0f0ff" stroke-width="1.2"/>
<line x1="53.2" x2="53.2" y1="666" y2="686.5" stroke="#ffd820" stroke-width="1.4"/>
<line x1="70.0" x2="70.0" y1="679" y2="686.5" stroke="#e83010" stroke-width="1.6"/>
<rect x="86.2" y="666" width="1.1" height="20.5" fill="url(#ln)"/>
<rect x="103.0" y="679" width="1.1" height="7.5" fill="url(#ln)"/>
<rect x="119.7" y="666" width="1.1" height="20.5" fill="url(#ln)"/>
<rect x="136.5" y="679" width="1.1" height="7.5" fill="url(#ln)"/>
<rect x="153.0" y="666" width="1.7" height="20.5" fill="url(#ln)"/>
<rect x="170.0" y="679" width="1.1" height="7.5" fill="url(#ln)"/>
<line x1="187.4" x2="187.4" y1="666" y2="686.5" stroke="#ffe860" stroke-width="1.2"/>
<rect x="203.6" y="679" width="1.1" height="7.5" fill="url(#ln)"/>
<rect x="220.0" y="666" width="1.7" height="20.5" fill="url(#ln)"/>
<rect x="237.1" y="679" width="1.1" height="7.5" fill="url(#ln)"/>
<rect x="253.9" y="666" width="1.1" height="20.5" fill="url(#ln)"/>
<rect x="270.7" y="679" width="1.1" height="7.5" fill="url(#ln)"/>
<rect x="287.4" y="666" width="1.1" height="20.5" fill="url(#ln)"/>
<line x1="304.8" x2="304.8" y1="679" y2="686.5" stroke="#e83010" stroke-width="1.6"/>
<line x1="321.5" x2="321.5" y1="666" y2="686.5" stroke="#ffd820" stroke-width="1.4"/>
<line x1="338.3" x2="338.3" y1="680" y2="686.5" stroke="#6aa8ff" stroke-width="1.2"/>
<text x="24.5" y="305" class="ts">25/09/2016 19:39:25</text>
<text x="24.5" y="405" class="ts">25/09/2016 19:39:22</text>
<text x="24.5" y="505" class="ts">25/09/2016 19:39:19</text>
<text x="24.5" y="605" class="ts">25/09/2016 19:39:16</text>
<text x="24.5" y="705" class="ts">25/09/2016 19:39:12</text>
</svg>
</div>
<div id="rt">
<div class="topline"></div>
<svg class="a" style="left:7.2px;top:14.9px" width="20" height="20" viewBox="0 0 20 20"><defs><linearGradient id="lbg" x1="0" y1="0" x2="0" y2="1"><stop offset="0" stop-color="#3fa010"/><stop offset="0.5" stop-color="#4cbc0a"/><stop offset="1" stop-color="#70e410"/></linearGradient><linearGradient id="lhg" x1="0" y1="0" x2="0" y2="1"><stop offset="0" stop-color="#fff" stop-opacity="0.5"/><stop offset="1" stop-color="#fff" stop-opacity="0.12"/></linearGradient></defs><circle cx="10" cy="10" r="9.1" fill="url(#lbg)" stroke="#2a9a06" stroke-width="1.2"/><path d="M2.4 9.6 C2.2 4.6 5.8 1.7 10 1.7 C14.2 1.7 17.8 4.6 17.6 9.6 C15 7.4 12.4 8.5 10 8.6 C7.4 8.7 5 10.4 2.4 9.6 Z" fill="url(#lhg)"/></svg>
<svg class="a" style="left:7.2px;top:39.0px" width="20" height="20" viewBox="0 0 20 20"><defs><linearGradient id="lbr" x1="0" y1="0" x2="0" y2="1"><stop offset="0" stop-color="#980f0c"/><stop offset="0.5" stop-color="#b0160e"/><stop offset="1" stop-color="#f4341c"/></linearGradient><linearGradient id="lhr" x1="0" y1="0" x2="0" y2="1"><stop offset="0" stop-color="#fff" stop-opacity="0.5"/><stop offset="1" stop-color="#fff" stop-opacity="0.12"/></linearGradient></defs><circle cx="10" cy="10" r="9.1" fill="url(#lbr)" stroke="#b00a08" stroke-width="1.2"/><path d="M2.4 9.6 C2.2 4.6 5.8 1.7 10 1.7 C14.2 1.7 17.8 4.6 17.6 9.6 C15 7.4 12.4 8.5 10 8.6 C7.4 8.7 5 10.4 2.4 9.6 Z" fill="url(#lhr)"/></svg>
<span class="a ms" style="transform:scaleX(0.8926);left:39.2px;top:14.7px;line-height:14px;">Winsock</span>
<span class="a ms" style="transform:scaleX(0.8238);left:39.2px;top:38.5px;line-height:14px;">COM Mirror</span>
<span class="a ms" style="transform:scaleX(0.8498);left:215.0px;top:14.7px;line-height:14px;">5048 bytes received (24 frames)</span>
<span class="a ms" style="transform:scaleX(0.8788);left:215.0px;top:38.5px;line-height:14px;">1 sec since last packet [0]</span>
<span class="a date" style="transform:scaleX(1.0655);left:418.8px;top:16.2px;line-height:16px;">domingo, 2016 setembro 25&nbsp; 22:39:25</span>
<div class="combo" style="left:479.3px;top:47.5px;width:191px;height:22px;background:#e0e0e0"><div class="cbtn"><i></i></div></div>
<span class="a tw" style="transform:scaleX(0.9284);left:482.8px;top:50.3px;line-height:18px;">TIANWANG 1C (TW-1C)</span>
<div class="gb" style="left:7px;top:77px;width:663px;height:354px"></div>
<div class="gl" style="left:14.5px;top:70px;width:76px;height:14px"></div>
<span class="a gbl" style="transform:scaleX(0.9751);left:16.6px;top:70.6px;line-height:14px;">KISS Frames</span>
<div class="gb" style="left:7px;top:445px;width:336px;height:57px"></div>
<div class="gl" style="left:14.5px;top:438px;width:47px;height:14px"></div>
<span class="a gbl gr" style="transform:scaleX(0.9310);left:16.8px;top:438.6px;line-height:14px;">Options</span>
<div class="gb" style="left:351px;top:445px;width:319px;height:57px"></div>
<div class="gl" style="left:357.5px;top:438px;width:162px;height:14px"></div>
<span class="a sat" style="transform:scaleX(1.0229);left:360.8px;top:438.2px;line-height:14px;">Satellite at QTH of PY4ZBZ</span>
<div id="kbox"><div id="kin">
<div class="kr u">________________________________________________________________________________</div>
<div class="kr ">&nbsp;</div>
<div class="kr g">2016-09-25 22:39:24.800 UTC: [210 Bytes KISS Frame (without CRC)]</div>
<div class="kr b">   1 &gt; C0 00 00 80 A7 82 03 43 C4 29 7D 00 00 00 00 00 00 00 00 00</div>
<div class="kr b">  21 &gt; 00 00 00 00 00 00 00 00 00 00 00 00 00 00 00 00 00 00 00 00</div>
<div class="kr b">  41 &gt; 00 00 5A 55 09 05 00 00 00 00 00 00 00 00 00 00 00 00 00 00</div>
<div class="kr b">  61 &gt; 00 00 00 00 00 00 00 00 00 00 00 00 00 00 00 00 00 00 00 55</div>
<div class="kr b">  81 &gt; 00 00 00 4E 00 09 00 06 00 0B 00 01 00 00 00 0D 00 01 00 00</div>
<div class="kr b"> 101 &gt; 00 00 00 00 00 00 00 00 00 00 00 00 00 00 00 00 00 00 00 00</div>
<div class="kr b"> 121 &gt; 00 00 00 00 00 00 00 00 00 00 00 00 00 00 00 89 01 00 00 01</div>
<div class="kr b"> 141 &gt; 00 3E F6 FB 02 00 00 00 00 00 00 00 00 00 00 00 00 00 00 00</div>
<div class="kr b"> 161 &gt; 00 00 00 00 00 00 15 00 00 00 00 00 00 00 00 00 00 00 00 00</div>
<div class="kr b"> 181 &gt; 00 00 00 00 00 00 00 00 00 00 00 00 00 00 00 00 00 00 00 00</div>
<div class="kr b"> 201 &gt; 00 00 00 00 00 00 00 00 00 C0</div>
<div class="kr v">À..</div>
<div class="kr v">€§‚.CÄ)}...............................ZU...................................U...N........</div>
<div class="kr v">...........................................‰.....&gt;</div>
<div class="kr v">öû.................................................................À</div>
<div class="kr u">________________________________________________________________________________</div>
</div>
<div class="ksb"><svg class="ch" style="top:6.3px" width="9" height="6" viewBox="0 0 9 6"><path d="M0.7 5.2 L4.5 1.2 L8.3 5.2" fill="none" stroke="#484848" stroke-width="1.9"/></svg><div class="kth"></div><svg class="ch" style="top:319px" width="9" height="6" viewBox="0 0 9 6"><path d="M0.7 0.8 L4.5 4.8 L8.3 0.8" fill="none" stroke="#484848" stroke-width="1.9"/></svg></div>
</div>
<div class="cb" style="left:14.8px;top:465px"></div>
<span class="a ms" style="transform:scaleX(0.8553);left:33.2px;top:464.4px;line-height:14px;">Decode KISS Frame</span>
<div class="cb on" style="left:150.8px;top:463.3px"><svg width="9" height="9" viewBox="0 0 9 9"><path d="M1 3 L3.4 5.4 L8 0.8 L8 3.8 L3.4 8.4 L1 6 Z" fill="#000"/></svg></div>
<span class="a ms" style="transform:scaleX(0.8366);left:169.3px;top:462.6px;line-height:14px;">Generate Time Frames (ext)</span>
<div class="cb on" style="left:150.8px;top:481.2px"><svg width="9" height="9" viewBox="0 0 9 9"><path d="M1 3 L3.4 5.4 L8 0.8 L8 3.8 L3.4 8.4 L1 6 Z" fill="#000"/></svg></div>
<span class="a ms" style="transform:scaleX(0.8630);left:169.3px;top:480.0px;line-height:14px;">filter packets if elev &lt;0</span>
<span class="a ms grn" style="transform:scaleX(0.8746);left:358.5px;top:463.0px;line-height:14px;">Az: 60,6°</span>
<span class="a ms grn" style="transform:scaleX(0.8471);left:431.4px;top:463.0px;line-height:14px;">El: 22,5°</span>
<span class="a ms grn" style="transform:scaleX(0.8083);left:487.0px;top:463.0px;line-height:14px;">Illum: 0%</span>
<span class="a ms" style="transform:scaleX(0.8643);left:567.3px;top:463.0px;line-height:14px;">37,20°W;15,39°S</span>
<div class="botsh"></div>
</div>
<div id="rb">
<svg class="a" style="left:9px;top:10px" width="15" height="10" viewBox="0 0 15 10"><path d="M2.3 1.6 H11.6 L13.6 4.6 V8.6 H0.5 V4.6 Z" fill="#4a4a4a" stroke="#0c0c0c" stroke-width="1"/><path d="M2.6 2.1 H11.3 L12.6 4.2 H1.4 Z" fill="#787878"/><rect x="3.8" y="5.7" width="7" height="1.1" fill="#c85a30"/><rect x="2.6" y="5.7" width="1.2" height="1.1" fill="#40a040"/></svg>
<span class="a seg" style="transform:scaleX(0.9514);left:29.2px;top:6.6px;line-height:16px;">High-Speed SoundModem by UZ7HO - Ver 0.15b - [GMSK GOMX3 4800bd]</span>
<svg class="a" style="left:555px;top:5px" width="120" height="22" viewBox="923 516 120 22"><path d="M932 525.5 H942" stroke="#000" stroke-width="1"/><rect x="977.5" y="520.5" width="9" height="9" fill="none" stroke="#000" stroke-width="1"/><path d="M1023 520 L1033 530 M1033 520 L1023 530" stroke="#000" stroke-width="1.1"/></svg>
<span class="a seg" style="transform:scaleX(0.9399);left:7.3px;top:31.6px;line-height:16px;">Settings</span>
<span class="a seg" style="transform:scaleX(0.9388);left:63.0px;top:31.6px;line-height:16px;">View</span>
<span class="a seg" style="transform:scaleX(0.9924);left:102.4px;top:31.6px;line-height:16px;">Clear monitor</span>
<span class="a seg" style="transform:scaleX(1.0044);left:189.7px;top:31.6px;line-height:16px;">About</span>
<div id="tb">
</div>
<div class="combo w" style="left:6px;top:61px;width:151.5px;height:20.5px"><div class="cbtn"><i></i></div></div>
<span class="a ms" style="transform:scaleX(0.8588);left:10.8px;top:64.5px;line-height:14px;">GMSK GOMX3 4800bd</span>
<span class="a ms" style="transform:scaleX(0.8475);left:166.7px;top:64.5px;line-height:14px;">DCD A</span>
<div class="dot" style="left:209px;top:65.9px;width:10.3px;height:10.3px;background:#e60000"></div>
<div class="combo w" style="left:229.8px;top:61px;width:151.5px;height:20.5px"><div class="cbtn"><i></i></div></div>
<span class="a ms" style="transform:scaleX(0.8539);left:234.9px;top:64.5px;line-height:14px;">FSK G3RUH 9600bd</span>
<span class="a ms" style="transform:scaleX(0.8117);left:390.7px;top:64.5px;line-height:14px;">DCD B</span>
<div class="dot" style="left:432.4px;top:65.6px;width:11.2px;height:11.2px;background:#800000"></div>
<span class="a ms" style="transform:scaleX(0.8417);left:463.6px;top:64.5px;line-height:14px;">DCD threshold</span>
<div class="ticks"><i style="left:552.4px;top:57px"></i><i style="left:552.4px;top:83px"></i><i style="left:563.5px;top:57px"></i><i style="left:563.5px;top:83px"></i><i style="left:574.6px;top:57px"></i><i style="left:574.6px;top:83px"></i><i style="left:585.7px;top:57px"></i><i style="left:585.7px;top:83px"></i><i style="left:596.8px;top:57px"></i><i style="left:596.8px;top:83px"></i><i style="left:607.9px;top:57px"></i><i style="left:607.9px;top:83px"></i><i style="left:619.1px;top:57px"></i><i style="left:619.1px;top:83px"></i><i style="left:630.2px;top:57px"></i><i style="left:630.2px;top:83px"></i><i style="left:641.3px;top:57px"></i><i style="left:641.3px;top:83px"></i><i style="left:652.4px;top:57px"></i><i style="left:652.4px;top:83px"></i><i style="left:663.5px;top:57px"></i><i style="left:663.5px;top:83px"></i></div>
<div class="track"></div><div class="thumb"></div>
<div class="sep"></div>
<div id="mon"></div>
<span class="a ms" style="transform:scaleX(0.8489);left:3.3px;top:95.0px;line-height:13px;">[priority:2 src:1 src_port:0 dest:10 dest_port:30 flags:len:207 RS_err:0]</span>
<span class="a ms" style="transform:scaleX(0.8694);left:3.3px;top:108.0px;line-height:13px;">00 80 A7 82 03 43 C4 28 7A 00 05 00 06 00 04 00 07 00 05 00 00 00 00 00 00 00 00 00 00 00 00 00 00 00 80 3F 00 00 00 00 00 00 00 00</span>
<span class="a ms" style="transform:scaleX(0.8722);left:3.3px;top:121.0px;line-height:13px;">00 00 00 00 00 00 00 00 00 00 00 00 00 00 00 00 00 00 00 00 00 00 00 00 00 00 00 00 00 00 00 00 00 00 00 00 00 00 00 00 00 00 00 00</span>
<span class="a ms" style="transform:scaleX(0.8722);left:3.3px;top:134.0px;line-height:13px;">00 00 00 00 00 00 00 00 00 00 00 00 00 00 00 00 00 00 00 00 00 00 00 00 00 00 00 00 00 00 00 00 00 00 00 00 00 00 00 00 00 00 00 00</span>
<span class="a ms" style="transform:scaleX(0.8709);left:3.3px;top:147.0px;line-height:13px;">00 00 00 00 00 00 00 00 00 00 00 00 00 00 00 00 00 00 00 00 00 00 00 00 00 00 00 00 00 00 00 00 00 00 1E 65 66 CA 6B 66 4F 4A 48</span>
<span class="a ms" style="transform:scaleX(0.8597);left:3.3px;top:160.0px;line-height:13px;">1A 8B 4A 71 F2 08 D2 92 4E E7 CF F8 8B 48 CF CD A7 E3 46 B6 7E BB C6 B4 B1 9A C5 00 00 00 00 00</span>
<span class="a ms" style="transform:scaleX(0.8652);left:3.3px;top:186.0px;line-height:13px;">1: [GOMX3] [19:39:24R]</span>
<span class="a ms" style="transform:scaleX(0.8489);left:3.3px;top:199.0px;line-height:13px;">[priority:2 src:1 src_port:0 dest:10 dest_port:30 flags:len:207 RS_err:0]</span>
<span class="a ms" style="transform:scaleX(0.8725);left:3.3px;top:212.0px;line-height:13px;">00 80 A7 82 03 43 C4 29 7D 00 00 00 00 00 00 00 00 00 00 00 00 00 00 00 00 00 00 00 00 00 00 00 00 00 00 00 00 00 00 00 5A 55 09</span>
<span class="a ms" style="transform:scaleX(0.8719);left:3.3px;top:225.0px;line-height:13px;">05 00 00 00 00 00 00 00 00 00 00 00 00 00 00 00 00 00 00 00 00 00 00 00 00 00 00 00 00 00 00 00 00 00 55 00 00 00 4E 00 09 00 06 00</span>
<span class="a ms" style="transform:scaleX(0.8709);left:3.3px;top:238.0px;line-height:13px;">0B 00 01 00 00 00 0D 00 01 00 00 00 00 00 00 00 00 00 00 00 00 00 00 00 00 00 00 00 00 00 00 00 00 00 00 00 00 00 00 00 00 00 00 00</span>
<span class="a ms" style="transform:scaleX(0.8701);left:3.3px;top:251.0px;line-height:13px;">00 00 89 01 00 00 01 00 3E F6 FB 02 00 00 00 00 00 00 00 00 00 00 00 00 00 00 00 00 00 00 00 00 00 15 00 00 00 00 00 00 00 00 00 00</span>
<span class="a ms" style="transform:scaleX(0.8708);left:3.3px;top:264.0px;line-height:13px;">00 00 00 00 00 00 00 00 00 00 00 00 00 00 00 00 00 00 00 00 00 00 00 00 00 00 00 00 00 00 00 00</span>
<div class="msb"><svg class="a" style="left:3px;top:7px" width="9" height="6" viewBox="0 0 9 6"><path d="M0.7 5.2 L4.5 1.2 L8.3 5.2" fill="none" stroke="#484848" stroke-width="1.9"/></svg><div class="mth"></div></div>
</div>
</body></html>
